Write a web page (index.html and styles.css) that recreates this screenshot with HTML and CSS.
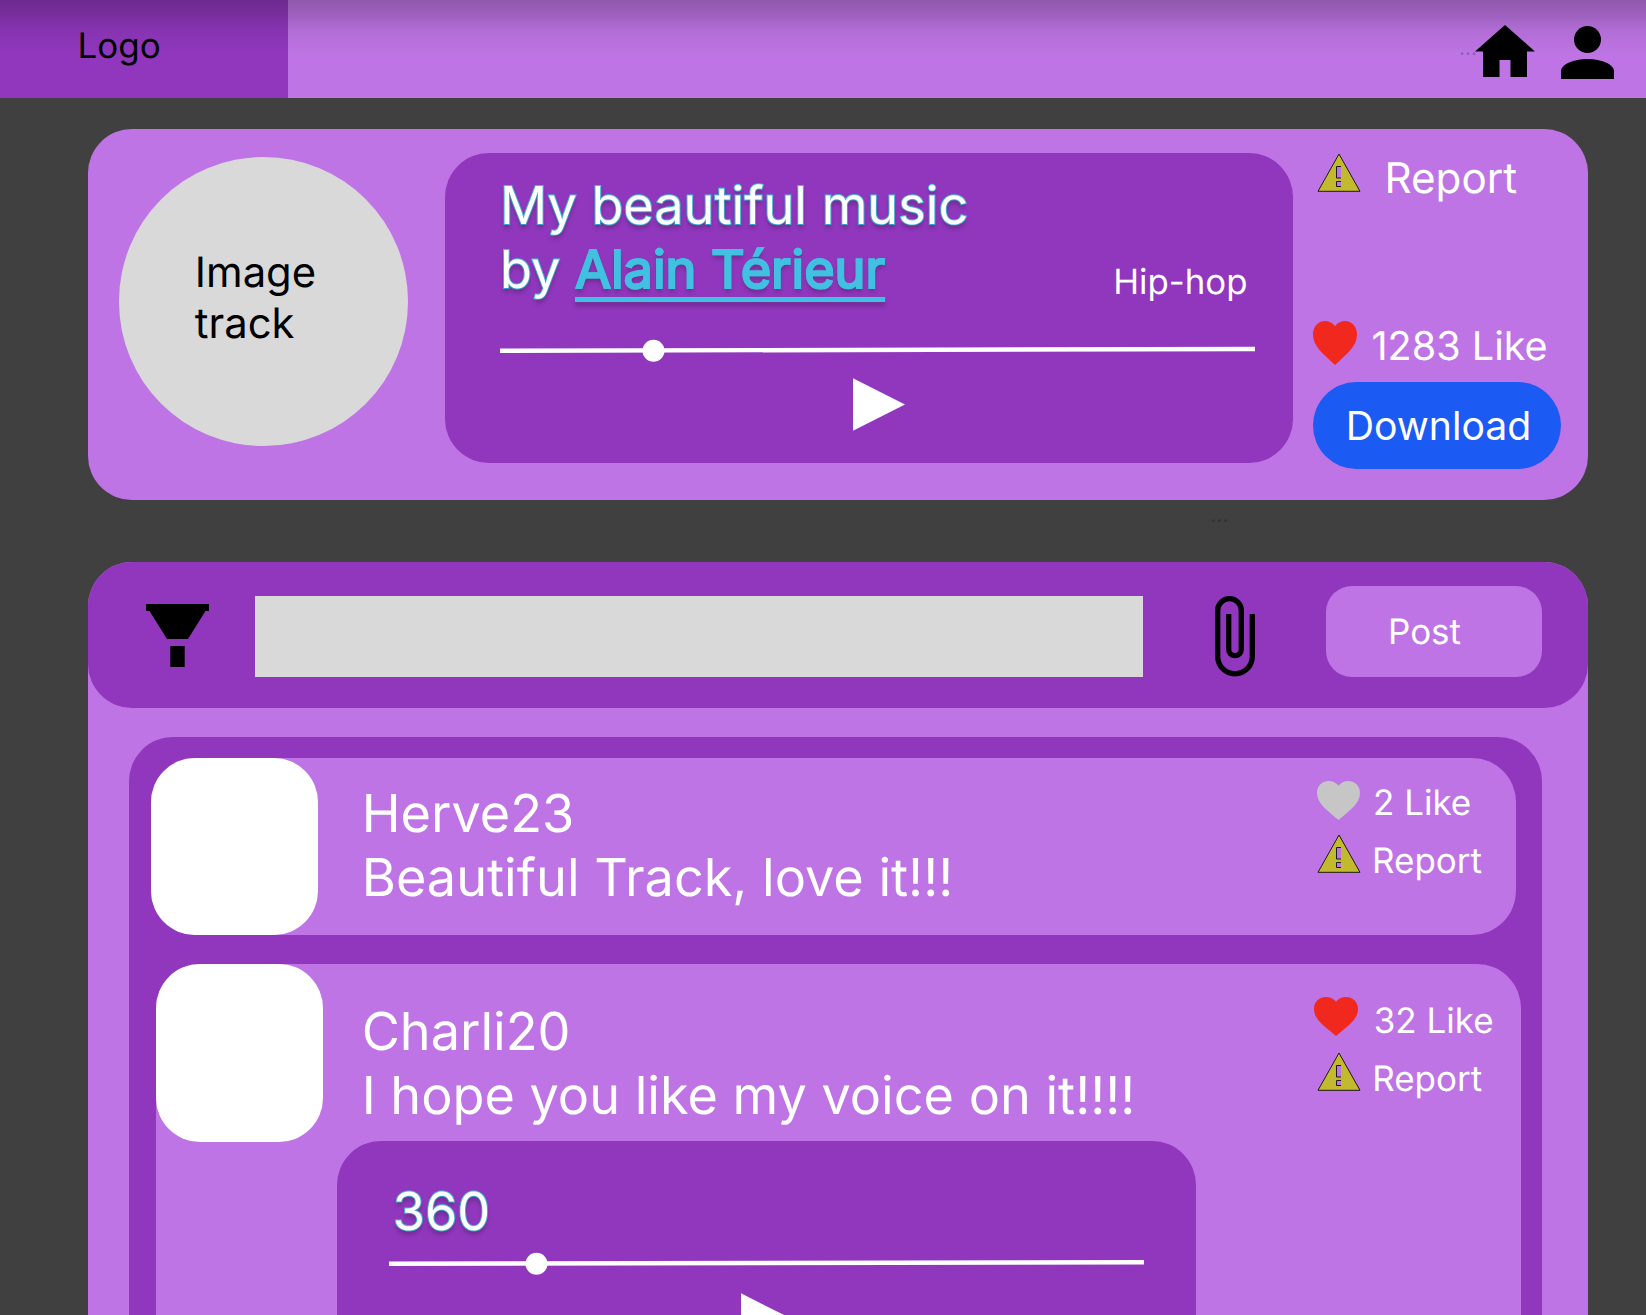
FILE: index.html
```html
<!DOCTYPE html>
<html lang="en">
<head>
<meta charset="utf-8">
<title>My beautiful music</title>
<link rel="stylesheet" href="styles.css">
</head>
<body>
<svg class="sprite" aria-hidden="true">
  <symbol id="heart" viewBox="0 0 44 40" preserveAspectRatio="none">
    <path d="M22 40C10 29.500 0 23 0 12.200C0 5 5.300 0 12 0C16 0 19.700 1.800 22 4.800C24.300 1.800 28 0 32 0C38.700 0 44 5 44 12.200C44 23 34 29.500 22 40Z" fill="currentColor"/>
  </symbol>
  <symbol id="warning" viewBox="0 0 44 39">
    <path d="M22 1L43 38.300H1Z" fill="#c3b92f" stroke="#1b1a12" stroke-width="1"/>
    <path d="M19.500 13.500H24V25H19.500ZM19.500 28.500H24V33.500H19.500Z" fill="#be74e4"/>
    <path d="M24 13.500H19.500V25H24M24 28.500H19.500V33.500H24" fill="none" stroke="#1b1a12" stroke-width="1"/>
  </symbol>
</svg>

<header class="topbar">
  <div class="logo">Logo</div>
  <nav class="topnav">
    <svg width="60" height="52" viewBox="0 0 60 52"><path d="M30 0L60 26.500H52V52H35.500V35H24.500V52H8V26.500H0Z"/></svg>
    <svg width="53" height="53" viewBox="0 0 53 53"><circle cx="26.500" cy="13.500" r="13.500"/><path d="M0 53V45.500C0 38 13 33 26.500 33S53 38 53 45.500V53Z"/></svg>
  </nav>
  <span class="dots dots-nav">...</span>
</header>

<main class="page">
  <section class="track">
    <div class="cover"><span>Image<br>track</span></div>
    <div class="player">
      <div class="player-head">
        <h1 class="title">My beautiful music<br>by <a class="artist">Alain Térieur</a></h1>
        <span class="genre">Hip-hop</span>
      </div>
      <svg class="seek" width="755" height="24" viewBox="0 0 755 24"><path d="M0 12.800L755 11" stroke="#fff" stroke-width="4.400"/><circle cx="153.500" cy="12.700" r="11"/></svg>
      <svg class="play" width="52" height="53" viewBox="0 0 52 53"><path d="M0 0.300L52 26.500L0 52.700Z"/></svg>
    </div>
    <div class="track-side">
      <div class="action report-main"><svg width="44" height="39"><use href="#warning"/></svg><span>Report</span></div>
      <div class="action like-main"><svg class="red" width="44" height="44"><use href="#heart"/></svg><span>1283 Like</span></div>
      <button class="download">Download</button>
    </div>
    <span class="dots dots-track">...</span>
  </section>

  <section class="comments">
    <form class="composer">
      <svg class="funnel" width="63" height="63" viewBox="0 0 63 63"><path d="M0 0H63V7H59.500L42 35H21L3.500 7H0ZM24.300 42H38.700V63H24.300Z"/></svg>
      <div class="field"></div>
      <svg class="clip" width="40" height="81" viewBox="0 0 40 81"><path d="M37.300 18V60.500A17.300 17.300 0 0 1 2.700 60.500V14.500A11.800 11.800 0 0 1 26.300 14.500V53.300A6.300 6.300 0 0 1 13.700 53.300V18" fill="none" stroke="#000" stroke-width="5.300"/></svg>
      <div class="post">Post</div>
    </form>
    <div class="thread">
      <article class="comment">
        <div class="avatar"></div>
        <p class="message">Herve23<br>Beautiful Track, love it!!!</p>
        <div class="actions">
          <div class="action"><svg class="grey" width="43" height="39"><use href="#heart"/></svg><span>2 Like</span></div>
          <div class="action"><svg width="44" height="39"><use href="#warning"/></svg><span>Report</span></div>
        </div>
      </article>
      <article class="comment reply">
        <div class="avatar"></div>
        <p class="message">Charli20<br>I hope you like my voice on it!!!!</p>
        <div class="actions">
          <div class="action"><svg class="red" width="44" height="39"><use href="#heart"/></svg><span>32 Like</span></div>
          <div class="action"><svg width="44" height="39"><use href="#warning"/></svg><span>Report</span></div>
        </div>
        <div class="attachment">
          <div class="title">360</div>
          <svg class="seek" width="755" height="24" viewBox="0 0 755 24"><path d="M0 12.800L755 11.300" stroke="#fff" stroke-width="4.400"/><circle cx="147.500" cy="12.800" r="11"/></svg>
          <svg class="play" width="52" height="53" viewBox="0 0 52 53"><path d="M0 0.300L52 26.500L0 52.700Z"/></svg>
        </div>
      </article>
    </div>
  </section>
</main>
</body>
</html>
```
FILE: styles.css
```css
:root {
  --light: #be74e4;
  --dark: #9037bd;
  --cyan: #41c1e1;
}
* { box-sizing: border-box; }
html, body { margin: 0; height: 1315px; overflow: hidden; }
body {
  display: flex;
  flex-direction: column;
  background: #404040;
  font-family: Inter, sans-serif;
  font-optical-sizing: none;
  font-variation-settings: "opsz" 14;
  text-rendering: geometricPrecision;
  font-size: 35px;
  line-height: 42px;
  color: #fff;
}
svg { display: block; flex: none; }
.sprite { position: absolute; width: 0; height: 0; }
.red { color: #f0281e; }
.grey { color: #c6c6c6; }

.topbar {
  position: relative;
  display: flex;
  flex: none;
  justify-content: space-between;
  height: 97.500px;
  background: linear-gradient(rgba(0,0,0,.24) 0, rgba(0,0,0,.17) 15px, rgba(0,0,0,.06) 32px, rgba(0,0,0,0) 54px), var(--light);
}
.logo {
  width: 288px;
  padding: 25px 0 0 77.500px;
  color: #000;
  background: linear-gradient(rgba(0,0,0,.24) 0, rgba(0,0,0,.17) 15px, rgba(0,0,0,.06) 32px, rgba(0,0,0,0) 54px), var(--dark);
}
.topnav { display: flex; gap: 26px; padding: 25px 32px 0 0; }
.topnav svg:last-child { margin-top: 1px; }

.dots { position: absolute; font-size: 21px; line-height: 24px; color: rgba(0,0,0,.22); }
.dots-nav { left: 1459px; top: 37px; }
.dots-track { left: 1122px; top: 375px; }

.page {
  display: flex;
  flex: 1;
  flex-direction: column;
  width: 1500px;
  min-height: 0;
  margin: 31.500px 0 0 88.300px;
  overflow: hidden;
}

.track {
  position: relative;
  display: flex;
  flex: none;
  align-items: flex-start;
  height: 370.500px;
  padding: 0 0 0 31px;
  border-radius: 44px;
  background: var(--light);
}
.cover {
  width: 288.500px;
  height: 288.500px;
  margin-top: 28px;
  padding: 91px 0 0 75.500px;
  border-radius: 50%;
  background: #d9d9d9;
  color: #000;
  font-size: 41.800px;
  line-height: 51px;
}
.player {
  width: 848.500px;
  height: 310px;
  margin: 24px 0 0 37.200px;
  padding: 20px 40px 0 55px;
  border-radius: 44px;
  background: var(--dark);
}
.player-head { display: flex; justify-content: space-between; align-items: flex-start; }
.title {
  margin: 0;
  font-size: 52.200px;
  font-weight: 400;
  line-height: 64px;
  -webkit-text-stroke: 2px var(--cyan);
  paint-order: stroke fill;
  text-shadow: 0 4px 4px rgba(0,0,0,.25);
}
.artist {
  color: var(--cyan);
  text-decoration: underline;
  text-decoration-thickness: 5px;
  text-underline-offset: 9px;
  text-decoration-skip-ink: none;
}
.genre { margin: 88px 6px 0 0; font-size: 34.800px; }
.seek, .play { fill: #fff; }
.player .seek { margin-top: 35px; }
.player .play { margin: 16px 0 0 353px; }

.action { display: flex; align-items: flex-start; }
.track-side { width: 250px; margin: 24px 0 0 20px; }
.report-main { padding-left: 4px; font-size: 42.200px; line-height: 51px; }
.report-main span { margin: 0 0 0 23px; }
.like-main { margin-top: 116.500px; font-size: 39.600px; line-height: 48px; }
.like-main span { margin: 1px 0 0 14px; }
.download {
  display: block;
  width: 248px;
  height: 86.500px;
  margin-top: 12.500px;
  padding: 1px 0 0 2px;
  border: 0;
  border-radius: 43.500px;
  background: #1b5bf4;
  color: #fff;
  font: inherit;
  font-size: 39.200px;
  line-height: 48px;
}

.comments {
  flex: 1;
  min-height: 0;
  margin-top: 62.500px;
  border-radius: 44px 44px 0 0;
  background: var(--light);
  display: flex;
  flex-direction: column;
}
.composer {
  display: flex;
  flex: none;
  align-items: flex-start;
  height: 146px;
  padding-left: 57.700px;
  border-radius: 44px;
  background: var(--dark);
}
.funnel { margin-top: 42px; }
.field { width: 888px; height: 81px; margin: 34.300px 0 0 46.300px; background: #d9d9d9; }
.clip { margin: 33.500px 0 0 71.700px; }
.post {
  width: 216px;
  height: 91px;
  margin: 24.400px 0 0 71px;
  padding: 25px 0 0 62px;
  border-radius: 26px;
  background: var(--light);
}
.thread {
  flex: 1;
  width: 1412.500px;
  min-height: 0;
  margin: 29px 0 0 41.200px;
  padding: 21px 0 0 21.500px;
  border-radius: 44px 44px 0 0;
  background: var(--dark);
  overflow: hidden;
}
.comment {
  display: grid;
  grid-template-columns: 167.300px 1fr 199px;
  width: 1365px;
  height: 176.500px;
  border-radius: 44px;
  background: var(--light);
}
.avatar { height: 176.500px; border-radius: 44px; background: #fff; }
.message { margin: 23px 0 0 43.500px; font-size: 52.200px; line-height: 64px; }
.actions { padding-top: 22.500px; }
.actions .action { height: 53px; }
.actions .action span { margin: 6px 0 0 11px; }
.actions .action:first-child span { margin: 1.500px 0 0 13px; }
.reply {
  grid-template-rows: 177px 400px;
  height: 600px;
  margin: 29px 0 0 4.700px;
}
.reply .avatar { height: 178.500px; }
.reply .message { margin: 35.500px 0 0 38.700px; }
.reply .actions { padding: 33.500px 0 0; margin-left: -4.500px; }
.reply .action:first-child { margin-left: -3px; }
.reply .actions .action { height: 54.500px; }
.reply .action:first-child span { margin: 2.500px 0 0 15.500px; }
.attachment {
  grid-column: 1 / -1;
  width: 859px;
  margin-left: 181px;
  padding: 38px 0 0 52px;
  border-radius: 44px;
  background: var(--dark);
}
.attachment .title { margin-left: 4px; }
.attachment .seek { margin-top: 8.500px; }
.attachment .play { margin: 18px 0 0 352px; }
```
